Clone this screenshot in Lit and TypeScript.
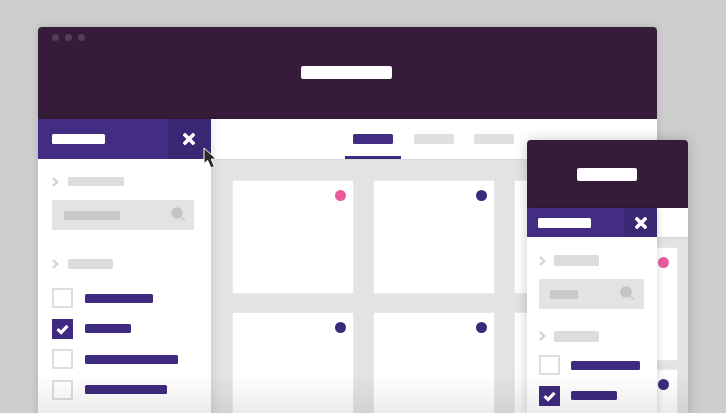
import { LitElement, html, css } from "lit";
import { customElement } from "lit/decorators.js";

const closeIcon = html`<svg class="x" viewBox="0 0 12 12"><path d="M2 2 L10 10 M10 2 L2 10" stroke="#fff" stroke-width="3.6" stroke-linecap="square" fill="none"/></svg>`;
const chevron = html`<svg class="chev" viewBox="0 0 7 10"><path d="M1 1 L5.2 5 L1 9" stroke="#d4d4d4" stroke-width="2.4" fill="none"/></svg>`;
const lens = html`<svg class="lens" viewBox="0 0 14 14"><circle cx="6" cy="6" r="5.8" fill="#c4c4c4"/><path d="M10 10 L13.2 13.2" stroke="#cdcdcd" stroke-width="1.8" stroke-linecap="round"/></svg>`;
const check = html`<svg viewBox="0 0 20 20"><path d="M5 10.2 L8.6 13.6 L15 6.8" stroke="#fff" stroke-width="3.2" fill="none"/></svg>`;

@customElement("app-root")
export class AppRoot extends LitElement {
  static styles = css`
    :host {
      display: block;
      width: 726px;
      height: 413px;
      overflow: hidden;
      position: relative;
      background: #cecece;
      box-sizing: border-box;
      padding: 27px 69px 0 38px;
    }
    * { box-sizing: border-box; }
    .window {
      height: 420px;
      display: flex;
      flex-direction: column;
      background: #e3e3e3;
      border-radius: 4px 4px 0 0;
      overflow: hidden;
      box-shadow: 0 0 8px rgba(0, 0, 0, 0.14);
    }
    .header {
      height: 92px;
      flex: none;
      background: #351c38;
      display: flex;
      align-items: center;
      justify-content: center;
      position: relative;
    }
    .dots { position: absolute; left: 14px; top: 6.5px; display: flex; gap: 6px; }
    .dots i { width: 7px; height: 7px; border-radius: 50%; background: #583d5b; }
    .title { width: 91px; height: 13px; background: #fff; border-radius: 2px; margin: -1px 0 0 -2px; }
    .body { flex: 1; display: flex; min-height: 0; }
    .sidebar {
      width: 173px;
      flex: none;
      background: #fff;
      position: relative;
      z-index: 1;
      box-shadow: 2px 0 8px rgba(0, 0, 0, 0.1);
    }
    .side-top {
      height: 40px;
      background: #422d82;
      display: flex;
      align-items: center;
      justify-content: space-between;
      padding-left: 14px;
    }
    .side-title { width: 53px; height: 10px; background: #fff; border-radius: 1.5px; }
    .close {
      width: 43px;
      height: 40px;
      background: #3b2875;
      display: flex;
      align-items: center;
      justify-content: center;
      padding-right: 1px;
    }
    .x { width: 12px; height: 12px; }
    .side-body { padding: 18px 17px 0 14px; display: flex; flex-direction: column; }
    .label { display: flex; align-items: center; gap: 9px; height: 9px; }
    .chev { width: 7px; height: 10px; flex: none; }
    .label b { display: block; height: 9px; background: #dcdcdc; border-radius: 1.5px; }
    .l56 { width: 56px; }
    .l45 { width: 45px; height: 10px !important; }
    .search {
      height: 30px;
      margin-top: 14px;
      background: #e3e3e3;
      display: flex;
      align-items: center;
      justify-content: space-between;
      padding: 0 9px 3px 12px;
    }
    .search b { width: 56px; height: 9px; background: #c9c9c9; display: block; margin-top: 3px; }
    .lens { width: 14px; height: 14px; }
    .label.second { margin-top: 29px; height: 10px; }
    .checks { margin-top: 19px; display: flex; flex-direction: column; gap: 10.5px; }
    .row { display: flex; align-items: center; gap: 12px; height: 20px; }
    .box { width: 21px; height: 20px; border: 2px solid #dedede; flex: none; }
    .box.on { background: #3f2a7f; border: none; }
    .box svg { display: block; width: 21px; height: 20px; }
    .row b { display: block; height: 9px; background: #3e2a7e; border-radius: 1.5px; }
    .main { flex: 1; min-width: 0; display: flex; flex-direction: column; }
    .tabs {
      height: 40px;
      flex: none;
      background: #fff;
      padding-left: 134px;
      display: flex;
      gap: 20px;
      box-shadow: 0 1px 2px rgba(0, 0, 0, 0.06);
    }
    .tab { width: 40px; height: 40px; padding-top: 15px; display: flex; justify-content: center; border-bottom: 3px solid transparent; }
    .tab.active { width: 56px; margin-right: -7px; border-bottom-color: #3e2a7e; }
    .tab b { display: block; width: 40px; height: 10px; border-radius: 1.5px; background: #dfdfdf; }
    .tab.active b { background: #422d82; }
    .grid {
      padding: 22px 0 0 22px;
      display: grid;
      grid-template-columns: repeat(3, 120px);
      grid-auto-rows: 112px;
      column-gap: 21px;
      row-gap: 20px;
    }
    .card { background: #fff; position: relative; box-shadow: 0 0 2px rgba(255, 255, 255, 0.7); }
    .dot {
      position: absolute;
      top: 8.5px;
      right: 7.5px;
      width: 11px;
      height: 11px;
      border-radius: 50%;
    }
    .pink { background: #e85c9c; }
    .navy { background: #3b2a7a; }

    .mini {
      position: absolute;
      left: 527px;
      top: 140px;
      width: 161px;
      height: 280px;
      background: #e3e3e3;
      border-radius: 4px 4px 0 0;
      overflow: hidden;
      display: flex;
      flex-direction: column;
      box-shadow: 0 0 14px rgba(0, 0, 0, 0.2);
    }
    .mini .header { height: 68px; }
    .mini .title { width: 60px; margin: 0 0 0 -2px; }
    .mini .sidebar { width: 130px; box-shadow: 2px 0 6px rgba(0, 0, 0, 0.12); }
    .mini .side-top { height: 29px; padding-left: 11px; }
    .mini .close { width: 33px; height: 29px; padding-right: 0; }
    .mini .side-body { padding: 18px 13px 0 12px; }
    .mini .label b { width: 45px; height: 11px; }
    .mini .label { height: 11px; gap: 8px; }
    .mini .search { margin-top: 13px; padding: 0 10px 3px 11px; }
    .mini .search b { width: 28px; }
    .mini .label.second { margin-top: 22px; height: 10px; }
    .mini .checks { margin-top: 14px; }
    .mini .row { gap: 11px; }
    .mini .tabstrip { height: 29px; flex: none; background: #fff; box-shadow: 0 1px 2px rgba(0, 0, 0, 0.06); }
    .mini .cards { padding: 11px 11px 0 0; display: flex; flex-direction: column; gap: 10px; flex: none; }
    .mini .card { height: 112px; flex: none; }
    .mini .dot { left: 1px; right: auto; }
    .fade {
      position: absolute;
      left: 38px;
      width: 650px;
      bottom: 0;
      height: 38px;
      pointer-events: none;
      z-index: 3;
      mix-blend-mode: multiply;
      background: linear-gradient(to bottom, #ffffff, #ececec);
    }
    .cursor {
      position: absolute;
      left: 201px;
      top: 146px;
      width: 17px;
      height: 25px;
      z-index: 4;
    }
  `;

  private sideTop() {
    return html`<div class="side-top"><div class="side-title"></div><div class="close">${closeIcon}</div></div>`;
  }

  private rows(items: number[], on: number) {
    return items.map(
      (w, i) => html`<div class="row"><div class="box ${i === on ? "on" : ""}">${i === on ? check : ""}</div><b style="width:${w}px"></b></div>`
    );
  }

  render() {
    return html`
      <div class="window">
        <div class="header">
          <div class="dots"><i></i><i></i><i></i></div>
          <div class="title"></div>
        </div>
        <div class="body">
          <div class="sidebar">
            ${this.sideTop()}
            <div class="side-body">
              <div class="label">${chevron}<b class="l56"></b></div>
              <div class="search"><b></b>${lens}</div>
              <div class="label second">${chevron}<b class="l45"></b></div>
              <div class="checks">${this.rows([68, 46, 93, 82], 1)}</div>
            </div>
          </div>
          <div class="main">
            <div class="tabs">
              <div class="tab active"><b></b></div>
              <div class="tab"><b></b></div>
              <div class="tab"><b></b></div>
            </div>
            <div class="grid">
              <div class="card"><span class="dot pink"></span></div>
              <div class="card"><span class="dot navy"></span></div>
              <div class="card"></div>
              <div class="card"><span class="dot navy"></span></div>
              <div class="card"><span class="dot navy"></span></div>
              <div class="card"></div>
            </div>
          </div>
        </div>
      </div>

      <div class="mini">
        <div class="header"><div class="title"></div></div>
        <div class="body">
          <div class="sidebar">
            ${this.sideTop()}
            <div class="side-body">
              <div class="label">${chevron}<b></b></div>
              <div class="search"><b></b>${lens}</div>
              <div class="label second">${chevron}<b></b></div>
              <div class="checks">${this.rows([69, 46], 1)}</div>
            </div>
          </div>
          <div class="main">
            <div class="tabstrip"></div>
            <div class="cards">
              <div class="card"><span class="dot pink"></span></div>
              <div class="card"><span class="dot navy"></span></div>
            </div>
          </div>
        </div>
      </div>

      <div class="fade"></div>
      <svg class="cursor" viewBox="0 0 17 25">
        <path d="M3 2 L3 17.5 L6.6 14.4 L10 22 L13.4 20.4 L10.2 13.2 L15 12.8 Z" fill="#2b2b2b" stroke="#fff" stroke-width="1" stroke-linejoin="round"/>
      </svg>
    `;
  }
}
